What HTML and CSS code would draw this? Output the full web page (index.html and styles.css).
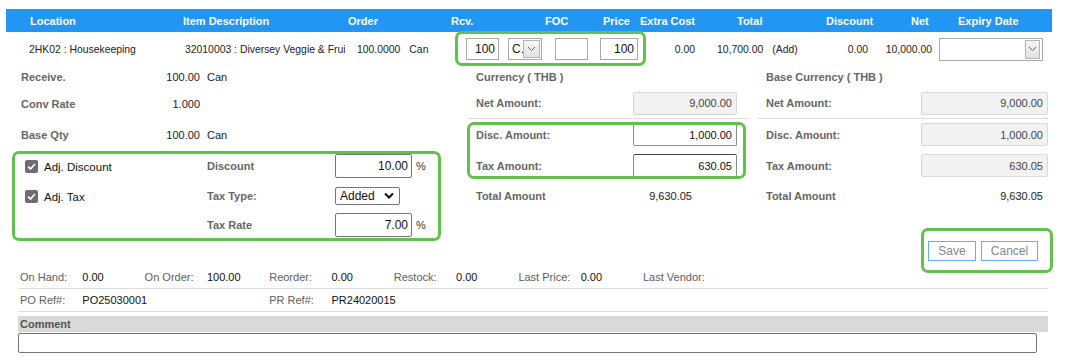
FILE: index.html
```html
<!DOCTYPE html>
<html>
<head>
    <title>Receiving - Item Detail</title>
    <meta charset="UTF-8">
    <link rel="stylesheet" href="styles.css">
</head>
<body>
<div class="page">
    <!-- grid header -->
    <div class="cols head">
        <div class="h-loc">Location</div>
        <div class="h-item">Item Description</div>
        <div class="h-order">Order</div>
        <div class="h-rcv">Rcv.</div>
        <div></div>
        <div class="h-foc">FOC</div>
        <div class="h-price">Price</div>
        <div class="h-extra">Extra Cost</div>
        <div class="h-total">Total</div>
        <div class="h-disc">Discount</div>
        <div class="h-net">Net</div>
        <div class="h-exp">Expiry Date</div>
    </div>

    <!-- item line -->
    <div class="cols line">
        <div class="r-loc">2HK02 : Housekeeping</div>
        <div class="r-item">32010003 : Diversey Veggie &amp; Frui</div>
        <div class="r-order">100.0000<span class="unit">Can</span></div>
        <div><input class="box r-rcv" type="text" value="100"></div>
        <div>
            <div class="pick r-uom">
                <span class="pick-text">C.</span>
                <span class="pick-btn"><svg width="9" height="6" viewBox="0 0 9 6"><path d="M1 1l3.5 3.5L8 1" fill="none" stroke="#666" stroke-width="1"/></svg></span>
            </div>
        </div>
        <div><input class="box r-foc" type="text" value=""></div>
        <div><input class="box r-price" type="text" value="100"></div>
        <div class="r-extra">0.00</div>
        <div class="r-total">10,700.00<span class="add">(Add)</span></div>
        <div class="r-disc">0.00</div>
        <div class="r-net">10,000.00</div>
        <div>
            <div class="pick r-exp">
                <span class="pick-text"></span>
                <span class="pick-btn"><svg width="9" height="6" viewBox="0 0 9 6"><path d="M1 1l3.5 3.5L8 1" fill="none" stroke="#666" stroke-width="1"/></svg></span>
            </div>
        </div>
    </div>

    <div class="details">
        <div class="col-left">
            <div class="kv row-a"><span class="lbl">Receive.</span><span class="num">100.00</span><span class="unit">Can</span></div>
            <div class="kv row-b"><span class="lbl">Conv Rate</span><span class="num">1.000</span><span></span></div>
            <div class="kv row-b"><span class="lbl">Base Qty</span><span class="num">100.00</span><span class="unit">Can</span></div>

            <div class="adj">
                <div class="chk"><span class="tick"><svg width="11" height="11" viewBox="0 0 11 11"><path d="M2.2 5.6l2.3 2.4 4.4-5" fill="none" stroke="#fff" stroke-width="1.8"/></svg></span>Adj. Discount</div>
                <div class="lbl">Discount</div>
                <div class="fld"><input class="edit" type="text" value="10.00"><span class="pct">%</span></div>

                <div class="chk"><span class="tick"><svg width="11" height="11" viewBox="0 0 11 11"><path d="M2.2 5.6l2.3 2.4 4.4-5" fill="none" stroke="#fff" stroke-width="1.8"/></svg></span>Adj. Tax</div>
                <div class="lbl">Tax Type:</div>
                <div class="fld">
                    <div class="sel"><span>Added</span><svg width="10" height="7" viewBox="0 0 10 7"><path d="M1 1.5l4 4 4-4" fill="none" stroke="#111" stroke-width="2"/></svg></div>
                </div>

                <div></div>
                <div class="lbl">Tax Rate</div>
                <div class="fld"><input class="edit" type="text" value="7.00"><span class="pct">%</span></div>
            </div>
        </div>

        <div class="col-amt col-cur">
            <div class="amt row-a"><span class="lbl">Currency ( THB )</span></div>
            <div class="amt row-b sep"><span class="lbl">Net Amount:</span><input class="ro" type="text" value="9,000.00" readonly></div>
            <div class="amt row-b"><span class="lbl">Disc. Amount:</span><input class="rw" type="text" value="1,000.00"></div>
            <div class="amt row-b"><span class="lbl">Tax Amount:</span><input class="rw" type="text" value="630.05"></div>
            <div class="amt row-c"><span class="lbl">Total Amount</span><span class="sum">9,630.05</span></div>
        </div>

        <div class="col-amt col-base">
            <div class="amt row-a"><span class="lbl">Base Currency ( THB )</span></div>
            <div class="amt row-b sep"><span class="lbl">Net Amount:</span><input class="ro" type="text" value="9,000.00" readonly></div>
            <div class="amt row-b"><span class="lbl">Disc. Amount:</span><input class="ro" type="text" value="1,000.00" readonly></div>
            <div class="amt row-b"><span class="lbl">Tax Amount:</span><input class="ro" type="text" value="630.05" readonly></div>
            <div class="amt row-c"><span class="lbl">Total Amount</span><span class="sum">9,630.05</span></div>
        </div>
    </div>

    <div class="actions">
        <button class="btn btn-save">Save</button>
        <button class="btn btn-cancel">Cancel</button>
    </div>

    <div class="info">
        <span class="lbl">On Hand:</span><span>0.00</span>
        <span class="lbl">On Order:</span><span>100.00</span>
        <span class="lbl">Reorder:</span><span>0.00</span>
        <span class="lbl">Restock:</span><span>0.00</span>
        <span class="lbl">Last Price:</span><span>0.00</span>
        <span class="lbl">Last Vendor:</span>
    </div>
    <div class="info">
        <span class="lbl">PO Ref#:</span><span class="wide">PO25030001</span>
        <span class="lbl">PR Ref#:</span><span class="wide">PR24020015</span>
    </div>

    <div class="comment-bar">Comment</div>
    <input class="comment" type="text">

    <!-- highlight frames -->
    <div class="mark mark-rcv"></div>
    <div class="mark mark-adj"></div>
    <div class="mark mark-amt"></div>
    <div class="mark mark-btn"></div>
</div>
</body>
</html>
```

FILE: styles.css
```css
* { box-sizing: border-box; }
body {
    margin: 0;
    background: #fff;
    font-family: "Liberation Sans", Arial, sans-serif;
    font-size: 11px;
    color: #222;
}
input, button {
    font-family: "Liberation Sans", Arial, sans-serif;
    margin: 0;
    outline: none;
}
.page {
    position: relative;
    width: 1066px;
    height: 362px;
    padding-top: 9px;
    overflow: hidden;
}

/* ---- item grid ---- */
.cols {
    display: grid;
    grid-template-columns: 164px 175px 95px 60px 40px 55px 45px 60px 115px 65px 57px 115px;
    width: 1046px;
    margin-left: 6px;
    align-items: center;
    white-space: nowrap;
}
.head {
    height: 23px;
    background: #2196f3;
    color: #fff;
    font-weight: bold;
    font-size: 11px;
}
.h-loc { padding-left: 24px; }
.h-item { padding-left: 13px; }
.h-order { padding-left: 3px; }
.h-rcv { padding-left: 11px; }
.h-foc { padding-left: 5px; }
.h-price { padding-left: 8px; }
.h-total { padding-left: 37px; }
.h-disc { padding-left: 11px; }
.h-net { padding-left: 31px; }
.h-exp { padding-left: 21px; }

.line {
    height: 34px;
    font-size: 10.4px;
    color: #222;
}
.r-loc { padding-left: 23px; }
.r-item { padding-left: 15px; overflow: hidden; }
.r-order { padding-left: 12px; }
.r-order .unit { margin-left: 9px; }
.r-extra { text-align: right; padding-right: 5px; }
.r-total { padding-left: 17px; }
.r-total .add { margin-left: 9px; }
.r-disc { text-align: right; padding-right: 12px; }
.r-net { text-align: right; padding-right: 5px; }

.box {
    display: block;
    height: 22px;
    border: 1px solid #a9a9a9;
    background: #fff;
    text-align: right;
    padding: 0 3px;
    font-size: 12px;
    color: #111;
}
.r-rcv { width: 33px; margin-left: 26px; }
.r-foc { width: 33px; margin-left: 15px; }
.r-price { width: 38px; margin-left: 5px; }

.pick {
    display: flex;
    align-items: center;
    height: 22px;
    border: 1px solid #a9a9a9;
    background: #fff;
    padding: 1px;
}
.pick-text { flex: 1; padding-left: 2px; font-size: 12px; overflow: hidden; }
.pick-btn {
    display: flex;
    align-items: center;
    justify-content: center;
    width: 17px;
    height: 18px;
    border: 1px solid #b5b5b5;
    background: linear-gradient(#f6f6f6, #e2e2e2);
}
.r-uom { width: 34px; margin-left: 8px; }
.r-exp { width: 104px; height: 23px; margin-left: 2px; padding-right: 2px; }
.r-exp .pick-btn { width: 15px; height: 19px; }

/* ---- detail block ---- */
.details {
    display: grid;
    grid-template-columns: 462px 290px 294px;
    margin-left: 6px;
}
.lbl { color: #666; font-weight: bold; }
.row-a { height: 22px; }
.row-b { height: 31px; }
.row-c { height: 29px; }

.kv {
    display: grid;
    grid-template-columns: 129px 50px auto;
    align-items: center;
    padding-left: 15px;
}
.kv .num { text-align: right; color: #222; }
.kv .unit { margin-left: 7px; color: #222; }

.adj {
    display: grid;
    grid-template-columns: 201px 128px auto;
    grid-template-rows: 31px 29px 29px;
    align-items: center;
}
.chk {
    display: flex;
    align-items: center;
    padding: 2px 0 0 19px;
    color: #111;
    font-size: 11.5px;
}
.tick {
    display: inline-flex;
    align-items: center;
    justify-content: center;
    width: 13px;
    height: 13px;
    margin-right: 6px;
    background: #6d6d6d;
    border-radius: 2px;
}
.fld { display: flex; align-items: center; }
.edit {
    width: 77px;
    height: 24px;
    border: 1px solid #767676;
    border-radius: 2px;
    background: #fff;
    text-align: right;
    padding: 0 3px;
    font-size: 12px;
    color: #111;
}
.pct { margin-left: 4px; color: #333; font-size: 11px; }
.sel {
    display: flex;
    align-items: center;
    justify-content: space-between;
    width: 65px;
    height: 18px;
    border: 1px solid #767676;
    border-radius: 2px;
    padding: 0 5px 0 4px;
    font-size: 12px;
    color: #111;
}

.col-amt { display: flex; flex-direction: column; }
.col-cur { padding: 0 8px 0 0; }
.col-base { padding: 0 4px 0 0; }
.amt {
    display: flex;
    align-items: center;
    justify-content: space-between;
    padding-left: 8px;
}
.sep { border-bottom: 1px solid #dcdcdc; }
.col-cur .sum { margin-right: 58px; }
.col-base .sum { margin-right: 5px; }
.sum { color: #222; }
.ro, .rw {
    height: 23px;
    border-radius: 2px;
    text-align: right;
    padding: 0 4px;
    font-size: 11px;
}
.col-cur .ro, .col-cur .rw { width: 104px; margin-right: 13px; }
.col-base .ro { width: 127px; }
.ro {
    background: #f2f2f2;
    border: 1px solid #d8d8d8;
    color: #444;
}
.rw {
    background: #fff;
    border: 1px solid #8a8a8a;
    border-top-color: #444;
    color: #111;
}

/* ---- actions and footer ---- */
.actions {
    display: flex;
    justify-content: flex-end;
    gap: 5px;
    height: 27px;
    padding: 2px 28px 0 0;
}
.btn {
    height: 20px;
    border: 1px solid #63b0f0;
    background: #fff;
    color: #888;
    font-size: 12px;
    padding: 0;
}
.btn-save { width: 48px; }
.btn-cancel { width: 57px; }

.info {
    display: grid;
    grid-template-columns: repeat(11, 62.3px);
    align-items: center;
    height: 23px;
    margin: 0 18px;
    padding-left: 2px;
    border-bottom: 1px solid #dcdcdc;
    white-space: nowrap;
}
.info span { color: #111; }
.info .lbl { color: #5e5e5e; font-weight: normal; }
.info .wide { grid-column: span 3; }

.comment-bar {
    margin: 4px 18px 0;
    height: 16px;
    line-height: 16px;
    padding-left: 2px;
    background: #d9d9d9;
    color: #555;
    font-weight: bold;
}
.comment {
    display: block;
    width: 1019px;
    height: 20px;
    margin: 1px 0 0 18px;
    border: 1px solid #767676;
    border-radius: 2px;
    background: #fff;
}

/* ---- green highlight frames ---- */
.mark {
    position: absolute;
    border: 3px solid #62c04c;
    border-radius: 7px;
}
.mark-rcv { left: 455px; top: 31px; width: 191px; height: 35px; }
.mark-adj { left: 12px; top: 151px; width: 429px; height: 90px; }
.mark-amt { left: 467px; top: 122px; width: 279px; height: 57px; }
.mark-btn { left: 921px; top: 228px; width: 132px; height: 45px; }
```
